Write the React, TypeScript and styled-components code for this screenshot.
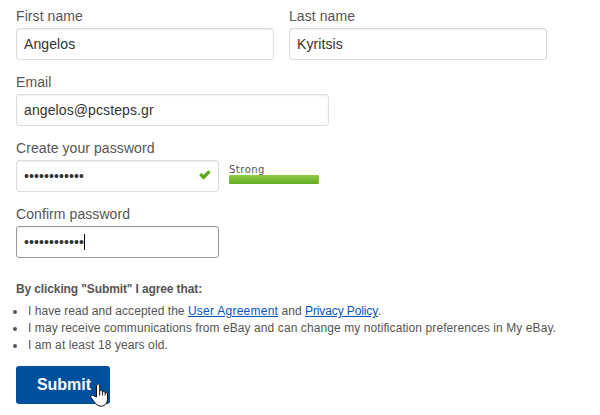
import React from "react";
import styled, { createGlobalStyle } from "styled-components";

const GlobalStyle = createGlobalStyle`
  * { box-sizing: border-box; }
  body {
    margin: 0;
    background: #fff;
    color: #555;
    font-family: "Liberation Sans", Arial, sans-serif;
    overflow: hidden;
  }
`;

const Form = styled.form`
  width: 600px;
  height: 415px;
  padding: 6px 16px 0;
`;

const Row = styled.div`
  display: flex;
  gap: 15px;
  height: 66px;
`;

const Field = styled.div<{ $width: number }>`
  width: ${(p) => p.$width}px;
`;

const Label = styled.div`
  height: 22px;
  font-size: 14px;
  line-height: 20px;
  letter-spacing: 0.08px;
  white-space: nowrap;
`;

const Box = styled.div<{ $focused?: boolean }>`
  display: flex;
  align-items: center;
  height: 32px;
  padding: 0 7px;
  border: 1px solid ${(p) => (p.$focused ? "#999" : "#ddd")};
  border-radius: 3px;
  box-shadow: inset 0 1px 2px rgba(0, 0, 0, 0.07);
  color: #333;
  font-size: 14px;
  line-height: 20px;
  letter-spacing: 0.1px;
`;

const Caret = styled.span`
  width: 1px;
  height: 16px;
  background: #000;
`;

const Check = styled.svg`
  width: 12px;
  height: 10px;
  margin: -2px 0 0 auto;
`;

const Strength = styled.div`
  width: 90px;
  margin: 25px 0 0 -5px;
`;

const StrengthLabel = styled.div`
  height: 12px;
  font: 10px/14px "DejaVu Sans", Verdana, sans-serif;
  letter-spacing: 0.5px;
`;

const StrengthBar = styled.div`
  height: 9px;
  border-radius: 1px;
  background: linear-gradient(#8fcb44, #65ab23);
`;

const AgreeTitle = styled.div`
  margin-top: 11px;
  height: 22px;
  font-size: 12px;
  font-weight: bold;
  line-height: 16px;
  letter-spacing: -0.12px;
`;

const Terms = styled.ul`
  margin: 0;
  padding: 0;
  list-style: none;
  font-size: 12px;
`;

const Term = styled.li<{ $spacing: number }>`
  display: flex;
  align-items: center;
  height: 17px;
  margin-left: -3px;
  line-height: 17px;
  white-space: pre;
  letter-spacing: ${(p) => p.$spacing}px;

  &::before {
    content: "";
    width: 4px;
    height: 4px;
    margin-right: 11px;
    border-radius: 50%;
    background: #555;
  }
`;

const Link = styled.a<{ $spacing: number }>`
  color: #0654ba;
  text-decoration: underline;
  letter-spacing: ${(p) => p.$spacing}px;
`;

const Submit = styled.button`
  position: relative;
  display: block;
  width: 94px;
  height: 38px;
  margin-top: 12px;
  padding: 0 0 0 2px;
  border: 0;
  border-radius: 3px;
  background: #00509d;
  color: #fff;
  font: bold 16px/36px "Liberation Sans", Arial, sans-serif;
`;

const Pointer = styled.svg`
  position: absolute;
  left: 74px;
  top: 17px;
  width: 18px;
  height: 24px;
`;

const PASSWORD = "•".repeat(12);

export default function App() {
  return (
    <>
      <GlobalStyle />
      <Form>
        <Row>
          <Field $width={258}>
            <Label>First name</Label>
            <Box>Angelos</Box>
          </Field>
          <Field $width={258}>
            <Label>Last name</Label>
            <Box>Kyritsis</Box>
          </Field>
        </Row>
        <Row>
          <Field $width={313}>
            <Label>Email</Label>
            <Box>angelos@pcsteps.gr</Box>
          </Field>
        </Row>
        <Row>
          <Field $width={203}>
            <Label>Create your password</Label>
            <Box>
              {PASSWORD}
              <Check viewBox="0 0 12 10">
                <path d="M0.2 5.2 2.2 3 4.5 5 9.3 0.3 11.6 2.5 4.6 9.8Z" fill="#5aab1e" />
              </Check>
            </Box>
          </Field>
          <Strength>
            <StrengthLabel>Strong</StrengthLabel>
            <StrengthBar />
          </Strength>
        </Row>
        <Row>
          <Field $width={203}>
            <Label>Confirm password</Label>
            <Box $focused>
              {PASSWORD}
              <Caret />
            </Box>
          </Field>
        </Row>
        <AgreeTitle>By clicking "Submit" I agree that:</AgreeTitle>
        <Terms>
          <Term $spacing={0.04}>
            {"I have read and accepted the "}
            <Link $spacing={0.25}>User Agreement</Link>
            {" and "}
            <Link $spacing={-0.12}>Privacy Policy</Link>.
          </Term>
          <Term $spacing={0.086}>
            I may receive communications from eBay and can change my notification preferences in My eBay.
          </Term>
          <Term $spacing={0.09}>I am at least 18 years old.</Term>
        </Terms>
        <Submit type="button">
          Submit
          <Pointer viewBox="0 0 18 24">
            <path
              d="M6.5 14V3C6.5 0.4 9.7 0.4 9.7 3V8C10.2 6.8 12.6 7 12.6 9C13.2 7.8 15.2 8.1 15.2 10C15.8 9 17.5 9.3 17.5 11V16.5C17.5 20 15 22.9 11.5 23.3C8 23.3 5.6 21 4 18.5L1.2 14.8C-0.1 13.1 2 11.5 3.7 12.7Z"
              fill="#fff"
              stroke="#111"
              strokeLinejoin="round"
            />
            <path d="M9.7 8V12.5M12.6 9V12.5M15.2 10V12.5" stroke="#111" fill="none" />
          </Pointer>
        </Submit>
      </Form>
    </>
  );
}
